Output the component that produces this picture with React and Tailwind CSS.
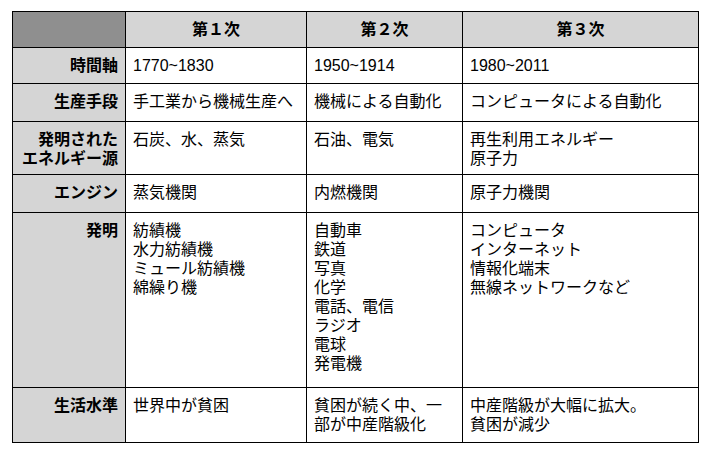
import React from 'react';

const rows = [
  { label: ['時間軸'], h: 'h-[36px]', cells: [['1770~1830'], ['1950~1914'], ['1980~2011']] },
  { label: ['生産手段'], h: 'h-[38px]', cells: [['手工業から機械生産へ'], ['機械による自動化'], ['コンピュータによる自動化']] },
  {
    label: ['発明された', 'エネルギー源'],
    h: 'h-[53px]',
    cells: [['石炭、水、蒸気'], ['石油、電気'], ['再生利用エネルギー', '原子力']],
  },
  { label: ['エンジン'], h: 'h-[38px]', cells: [['蒸気機関'], ['内燃機関'], ['原子力機関']] },
  {
    label: ['発明'],
    h: 'h-[175px]',
    cells: [
      ['紡績機', '水力紡績機', 'ミュール紡績機', '綿繰り機'],
      ['自動車', '鉄道', '写真', '化学', '電話、電信', 'ラジオ', '電球', '発電機'],
      ['コンピュータ', 'インターネット', '情報化端末', '無線ネットワークなど'],
    ],
  },
  {
    label: ['生活水準'],
    h: 'h-[55px]',
    cells: [['世界中が貧困'], ['貧困が続く中、一', '部が中産階級化'], ['中産階級が大幅に拡大。', '貧困が減少']],
  },
];

const Lines = ({ lines }) => lines.map((l, i) => <div key={i}>{l}</div>);

const App = () => {
  return (
    <div className="w-[709px] h-[456px] bg-white pt-[11px] pl-[12px] font-['Liberation_Sans','Noto_Sans_CJK_JP',sans-serif] text-[16px] leading-[19px] text-black">
      <table className="table-fixed border-collapse w-[686px] border border-black">
        <colgroup>
          <col className="w-[113px]" />
          <col className="w-[181px]" />
          <col className="w-[156px]" />
          <col className="w-[236px]" />
        </colgroup>
        <thead>
          <tr className="h-[36px]">
            <th className="border border-black bg-[#8f8f8f]"></th>
            <th className="border border-black bg-[#d5d5d5] font-bold align-middle text-center">第１次</th>
            <th className="border border-black bg-[#d5d5d5] font-bold align-middle text-center">第２次</th>
            <th className="border border-black bg-[#d5d5d5] font-bold align-middle text-center">第３次</th>
          </tr>
        </thead>
        <tbody>
          {rows.map((row, i) => (
            <tr key={i} className={row.h}>
              <td className="border border-black bg-[#d5d5d5] align-top text-right font-bold pt-[8px] pr-[7px]">
                <Lines lines={row.label} />
              </td>
              {row.cells.map((c, j) => (
                <td key={j} className="border border-black align-top pt-[8px] pl-[7px]">
                  <Lines lines={c} />
                </td>
              ))}
            </tr>
          ))}
        </tbody>
      </table>
    </div>
  );
};

export default App;
